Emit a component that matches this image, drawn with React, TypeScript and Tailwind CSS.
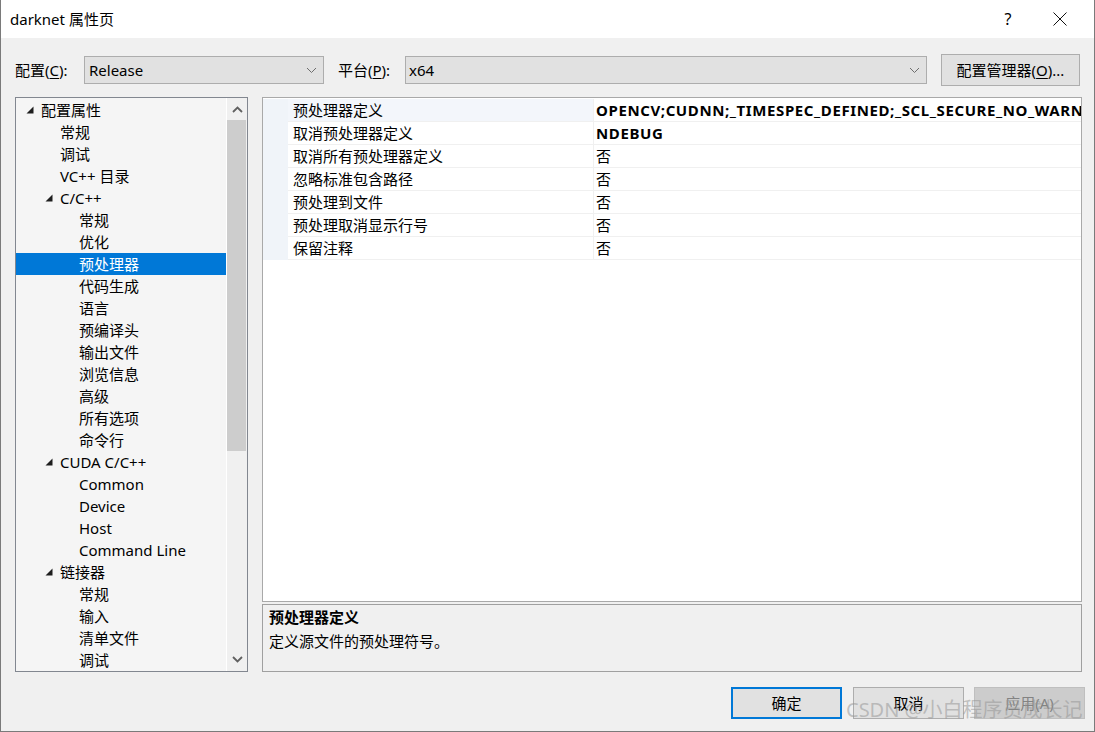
import React from 'react';

type Node = { t: string; l: number; tri?: boolean; sel?: boolean };

const tree: Node[] = [
  { t: '配置属性', l: 0, tri: true },
  { t: '常规', l: 1 },
  { t: '调试', l: 1 },
  { t: 'VC++ 目录', l: 1 },
  { t: 'C/C++', l: 1, tri: true },
  { t: '常规', l: 2 },
  { t: '优化', l: 2 },
  { t: '预处理器', l: 2, sel: true },
  { t: '代码生成', l: 2 },
  { t: '语言', l: 2 },
  { t: '预编译头', l: 2 },
  { t: '输出文件', l: 2 },
  { t: '浏览信息', l: 2 },
  { t: '高级', l: 2 },
  { t: '所有选项', l: 2 },
  { t: '命令行', l: 2 },
  { t: 'CUDA C/C++', l: 1, tri: true },
  { t: 'Common', l: 2 },
  { t: 'Device', l: 2 },
  { t: 'Host', l: 2 },
  { t: 'Command Line', l: 2 },
  { t: '链接器', l: 1, tri: true },
  { t: '常规', l: 2 },
  { t: '输入', l: 2 },
  { t: '清单文件', l: 2 },
  { t: '调试', l: 2 },
];

const levelPad = ['pl-[10px]', 'pl-[29px]', 'pl-[48px]'];

const props: { n: string; v: string; bold?: boolean; sel?: boolean }[] = [
  { n: '预处理器定义', v: 'OPENCV;CUDNN;_TIMESPEC_DEFINED;_SCL_SECURE_NO_WARNINGS;%(PreprocessorDefinitions)', bold: true, sel: true },
  { n: '取消预处理器定义', v: 'NDEBUG', bold: true },
  { n: '取消所有预处理器定义', v: '否' },
  { n: '忽略标准包含路径', v: '否' },
  { n: '预处理到文件', v: '否' },
  { n: '预处理取消显示行号', v: '否' },
  { n: '保留注释', v: '否' },
];

function Tri() {
  return (
    <svg width="8" height="8" viewBox="0 0 8 8" className="block">
      <polygon points="7.5,0.5 7.5,7.5 0.5,7.5" fill="#1e1e1e" />
    </svg>
  );
}

function ComboChevron() {
  return (
    <svg width="11" height="7" viewBox="0 0 11 7" className="block">
      <polyline points="1,1 5.5,5.5 10,1" fill="none" stroke="#6d6d6d" strokeWidth="1" />
    </svg>
  );
}

function ScrollChevron({ up }: { up?: boolean }) {
  return (
    <svg width="11" height="7" viewBox="0 0 11 7" className="block">
      {up ? (
        <polyline points="1,6 5.5,1.5 10,6" fill="none" stroke="#606060" strokeWidth="1.8" />
      ) : (
        <polyline points="1,1 5.5,5.5 10,1" fill="none" stroke="#606060" strokeWidth="1.8" />
      )}
    </svg>
  );
}

export default function App() {
  return (
    <div className="relative w-[1095px] h-[732px] overflow-hidden bg-[#f0f0f0] border-l border-r border-b border-[#7a7a7a] text-[15px] text-[#000] font-['Noto_Sans','Noto_Sans_CJK_SC',sans-serif] leading-none select-none">
      {/* Title bar */}
      <div className="h-[38px] bg-white flex items-center">
        <div className="pl-[9px] flex-1">darknet 属性页</div>
        <div className="w-[30px] text-center text-[16px] mr-[27px]">?</div>
        <div className="w-[20px] flex items-center justify-center mr-[24px]">
          <svg width="14" height="14" viewBox="0 0 14 14" className="block">
            <line x1="0.5" y1="0.5" x2="13.5" y2="13.5" stroke="#111" strokeWidth="1" />
            <line x1="13.5" y1="0.5" x2="0.5" y2="13.5" stroke="#111" strokeWidth="1" />
          </svg>
        </div>
      </div>

      {/* Config row */}
      <div className="pt-[16px] pl-[14px] flex items-center h-[48px]">
        <div className="w-[69px] flex items-center h-[32px]">
          配置(<span className="underline underline-offset-2">C</span>):
        </div>
        <div className="w-[240px] h-[28px] bg-[#e1e1e1] border border-[#adadad] flex items-center pl-[4px] pr-[6px]">
          <span className="flex-1">Release</span>
          <ComboChevron />
        </div>
        <div className="ml-[14px] w-[67px] flex items-center h-[32px]">
          平台(<span className="underline underline-offset-2">P</span>):
        </div>
        <div className="w-[522px] h-[28px] bg-[#e1e1e1] border border-[#adadad] flex items-center pl-[3px] pr-[6px]">
          <span className="flex-1">x64</span>
          <ComboChevron />
        </div>
        <div className="ml-[14px] w-[139px] h-[32px] bg-[#e1e1e1] border border-[#adadad] flex items-center justify-center">
          配置管理器(<span className="underline underline-offset-2">O</span>)...
        </div>
      </div>

      {/* Panels */}
      <div className="mt-[11px] pl-[14px] flex h-[575px]">
        {/* Tree */}
        <div className="w-[233px] h-full border border-[#828790] bg-[#f5f5f5] flex overflow-hidden">
          <div className="flex-1 pt-px overflow-hidden border-r border-white">
            {tree.map((n, i) => (
              <div
                key={i}
                className={`h-[22px] flex items-center ${levelPad[n.l]} ${n.sel ? 'bg-[#0078d7] text-white' : ''}`}
              >
                <div className="w-[15px] flex items-center">{n.tri ? <Tri /> : null}</div>
                <span className="whitespace-nowrap">{n.t}</span>
              </div>
            ))}
          </div>
          <div className="w-[20px] h-full bg-[#f0f0f0] flex flex-col">
            <div className="h-[22px] flex items-center justify-center">
              <ScrollChevron up />
            </div>
            <div className="h-[331px] w-[19px] bg-[#cdcdcd]" />
            <div className="flex-1" />
            <div className="h-[22px] flex items-center justify-center mb-[1px]">
              <ScrollChevron />
            </div>
          </div>
        </div>

        {/* Right column */}
        <div className="ml-[14px] w-[820px] h-full flex flex-col">
          <div className="h-[505px] border border-[#a9a9a9] bg-white overflow-hidden pt-px">
            {props.map((p, i) => (
              <div key={i} className="h-[23px] flex">
                <div className="w-[25px] bg-[#f0f4f9]" />
                <div
                  className={`w-[305px] flex items-center pl-[5px] border-b border-[#f0f0f0] ${p.sel ? 'bg-[#f3f6fb]' : ''}`}
                >
                  <span className="whitespace-nowrap">{p.n}</span>
                </div>
                <div className="flex-1 flex items-center pl-[2px] border-b border-l border-[#f0f0f0] overflow-hidden">
                  <span className={`whitespace-nowrap ${p.bold ? 'font-bold tracking-[0.6px]' : ''}`}>{p.v}</span>
                </div>
              </div>
            ))}
          </div>
          <div className="mt-[2px] flex-1 border border-[#a0a0a0] bg-[#f0f0f0] pl-[6px] pt-[2px]">
            <div className="h-[20px] flex items-center font-bold">预处理器定义</div>
            <div className="mt-[4px] h-[20px] flex items-center">定义源文件的预处理符号。</div>
          </div>
        </div>
      </div>

      {/* Buttons */}
      <div className="mt-[15px] flex justify-end pr-[9px]">
        <div className="w-[111px] h-[32px] border-2 border-[#0078d7] bg-[#e1e1e1] flex items-center justify-center">
          确定
        </div>
        <div className="ml-[11px] w-[111px] h-[32px] border border-[#adadad] bg-[#e1e1e1] flex items-center justify-center">
          取消
        </div>
        <div className="ml-[10px] w-[111px] h-[32px] border border-[#bfbfbf] bg-[#cccccc] text-[#838383] flex items-center justify-center">
          应用(A)
        </div>
      </div>

      {/* Watermark */}
      <div className="absolute left-[845px] top-[700px] text-[20px] leading-none text-[rgba(150,150,150,0.55)] whitespace-nowrap font-['Noto_Sans','Noto_Sans_CJK_SC',sans-serif]">
        CSDN @小白程序员成长记
      </div>
    </div>
  );
}
